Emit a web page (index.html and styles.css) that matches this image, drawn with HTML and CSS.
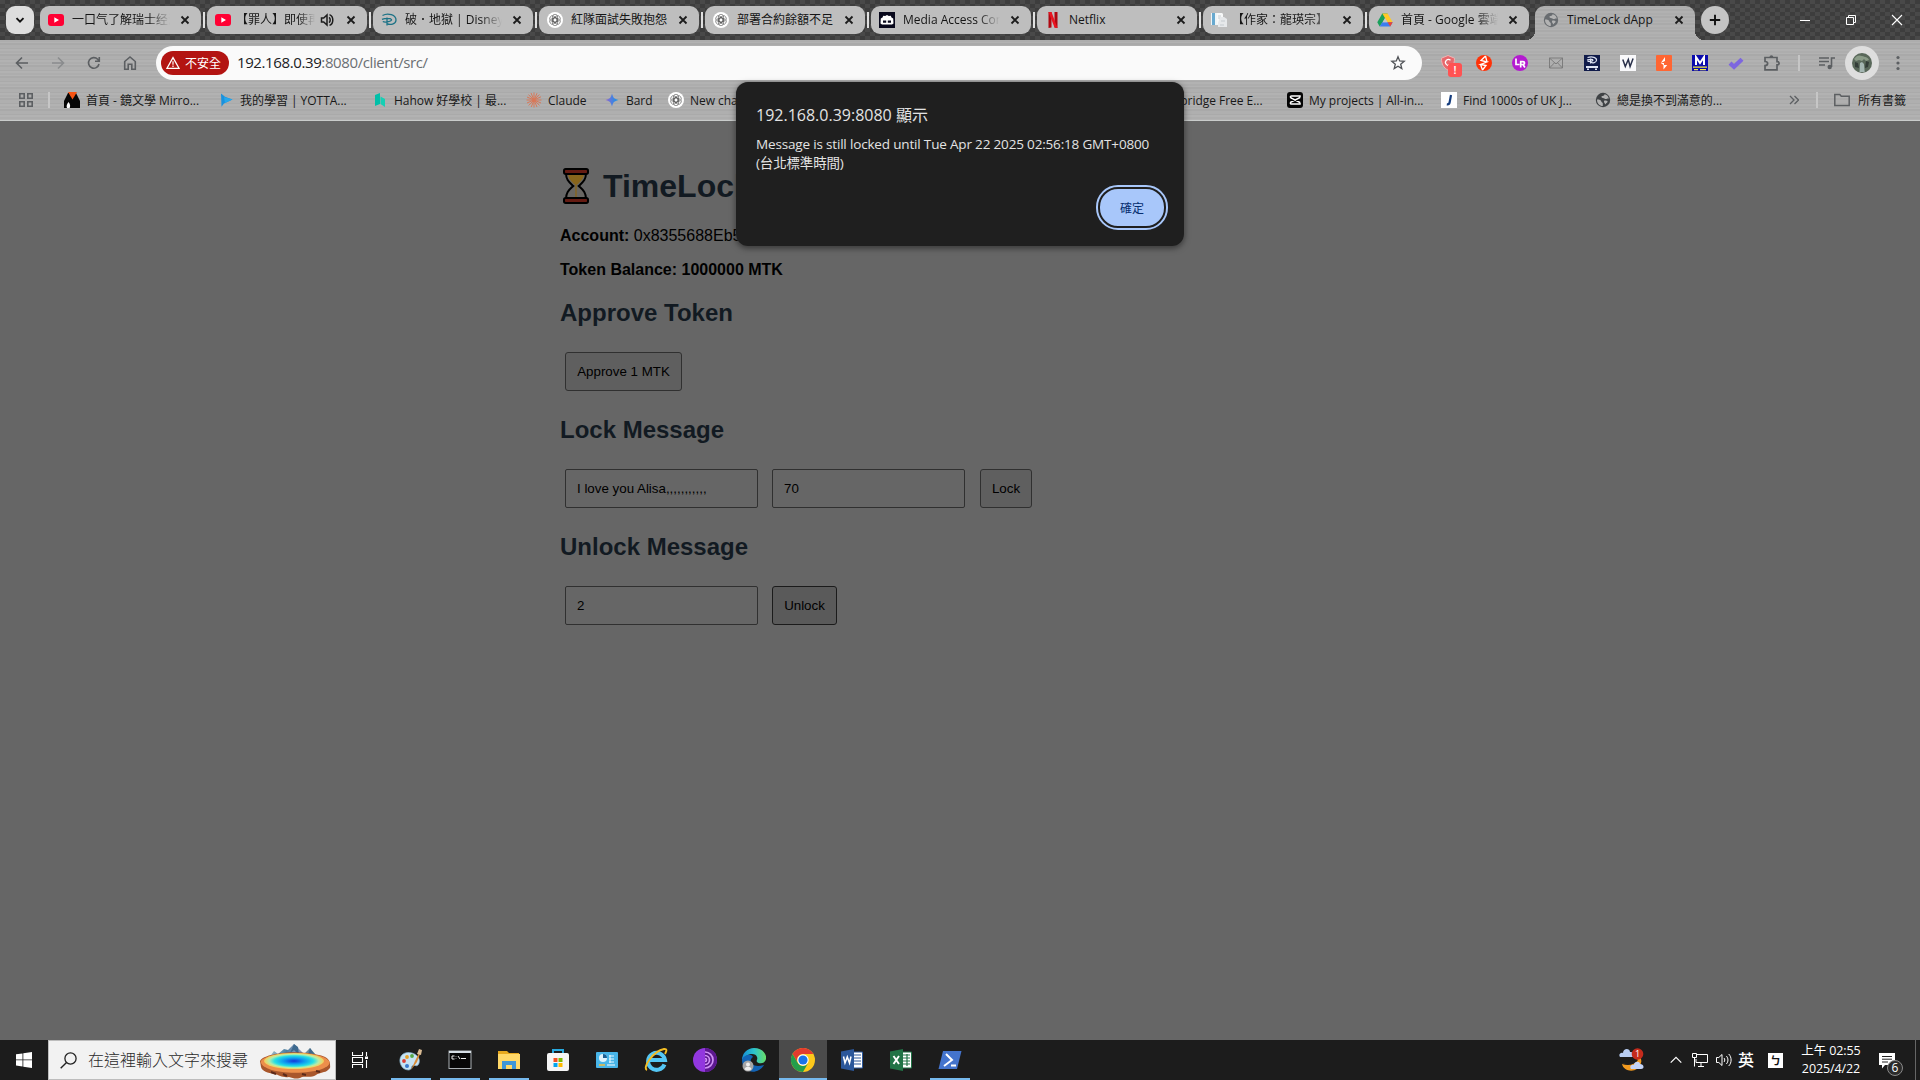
FILE: index.html
```html
<!DOCTYPE html>
<html lang="zh-Hant">
<head>
<meta charset="utf-8">
<title>TimeLock dApp</title>
<link rel="stylesheet" href="styles.css">
</head>
<body>
<svg class="defs" width="0" height="0">
  <defs>
    <symbol id="x" viewBox="0 0 16 16"><path d="M4.5 4.5l7 7M11.5 4.5l-7 7" stroke="#1c1c1c" stroke-width="1.8"/></symbol>
    <symbol id="yt" viewBox="0 0 16 16"><rect y="2" width="16" height="12" rx="3" fill="#ff0033"/><path d="M6.3 5.3v5.4L11 8z" fill="#fff"/></symbol>
    <symbol id="gpt" viewBox="0 0 16 16"><circle cx="8" cy="8" r="8" fill="#fff"/><g fill="none" stroke="#555" stroke-width=".6"><rect x="5.4" y="2.3" width="5.2" height="7.8" rx="2.6"/><rect x="5.4" y="2.3" width="5.2" height="7.8" rx="2.6" transform="rotate(60 8 8)"/><rect x="5.4" y="2.3" width="5.2" height="7.8" rx="2.6" transform="rotate(120 8 8)"/><rect x="5.4" y="2.3" width="5.2" height="7.8" rx="2.6" transform="rotate(180 8 8)"/><rect x="5.4" y="2.3" width="5.2" height="7.8" rx="2.6" transform="rotate(240 8 8)"/><rect x="5.4" y="2.3" width="5.2" height="7.8" rx="2.6" transform="rotate(300 8 8)"/></g></symbol>
    <symbol id="globe" viewBox="0 0 16 16"><circle cx="8" cy="8" r="7.2" fill="currentColor"/><path d="M2 7.4c2.6 0 4 .4 4.3 2.1.2 1.2 1.5.6 1.5 2.1V14C4.6 14 1.9 11.3 2 7.4zM9.5 2.2c0 1.8-1.9 1.5-2.8 2-.8.5 0 1.7 1.1 1.7 1.5 0 1.8 1.2 3.2 1.2.9 0 1.2-.8 2.8-.4-.1-2-2-4.2-4.3-4.5zM9.4 8.6c1.6 0 3.4.2 3.2 1.2-.2 1.2-1.7 1.3-2 2.6-.9-.6-2.3-2.9-1.2-3.8z" fill="#b3b3b3"/></symbol>
  </defs>
</svg>

<div class="screen">
  <header class="tabstrip">
    <button class="tab-search"><svg width="10" height="10" viewBox="0 0 10 10"><path d="M1.5 3.2L5 6.7l3.5-3.5" fill="none" stroke="#111" stroke-width="1.9"/></svg></button>
    <div class="tabs">
      <div class="tab"><svg class="ic"><use href="#yt"/></svg><span class="label fade">一口气了解瑞士经济</span><svg class="ic"><use href="#x"/></svg></div>
      <div class="tab"><svg class="ic"><use href="#yt"/></svg><span class="label fade cjk-open">【罪人】即使再</span><svg class="ic audio" viewBox="0 0 16 16"><path d="M2.5 6v4h2.2L8 13V3L4.7 6z" fill="none" stroke="#1c1c1c" stroke-width="1.5"/><path d="M10 5.3c1.6 1 1.6 4.4 0 5.4M10.5 2.6c4.4 1.6 4.4 9.2 0 10.8" fill="none" stroke="#1c1c1c" stroke-width="1.5"/></svg><svg class="ic"><use href="#x"/></svg></div>
      <div class="tab"><svg class="ic" viewBox="0 0 16 16"><path d="M1.5 3.5C7 .3 15.2 3 15 8.3c-.2 3.9-6 4.9-9 3.3M1 7.3c3-1.2 8.5-1.4 9.5.2.9 1.7-6.3 3.3-8.7 2M6 5.5v8" fill="none" stroke="#1c7286" stroke-width="1.3"/></svg><span class="label fade">破．地獄 | Disney+</span><svg class="ic"><use href="#x"/></svg></div>
      <div class="tab"><svg class="ic"><use href="#gpt"/></svg><span class="label">紅隊面試失敗抱怨</span><svg class="ic"><use href="#x"/></svg></div>
      <div class="tab"><svg class="ic"><use href="#gpt"/></svg><span class="label">部署合約餘額不足</span><svg class="ic"><use href="#x"/></svg></div>
      <div class="tab"><svg class="ic" viewBox="0 0 16 16"><path d="M0 0h16v16H0z" fill="#08081c"/><path d="M1.5 11.5l.3-5 1.7-1 .7-1.8 2 .3L8 3l1.8 1 2-.3.7 1.8 1.7 1 .3 5-1.5 1H3z" fill="#fff"/><path d="M4 8.5h3.2v2.3H4zM8.8 8.5H12v2.3H8.8z" fill="#08081c"/></svg><span class="label fade">Media Access Con</span><svg class="ic"><use href="#x"/></svg></div>
      <div class="tab"><svg class="ic" viewBox="0 0 16 16"><path d="M3.5 0h3v15.5l-3 .5zM9.5 0h3v16l-3-.5z" fill="#b00710"/><path d="M3.5 0h3l6 16-3-.4z" fill="#e91420"/></svg><span class="label">Netflix</span><svg class="ic"><use href="#x"/></svg></div>
      <div class="tab"><svg class="ic" viewBox="0 0 16 16"><path d="M0 1h9v12H0z" fill="#edf4f7"/><path d="M1 1h3v12H1z" fill="#68a9cf"/><path d="M6 1h5l1 1v10H6z" fill="#f7f8f8"/><path d="M9 5h4l3 2v8H7v-4z" fill="#e6e8ea"/><path d="M7 4h3M7 6h2M10 9h4M9 13h4" stroke="#bbc3c8" stroke-width=".8"/></svg><span class="label fade cjk-open">【作家：龍瑛宗】</span><svg class="ic"><use href="#x"/></svg></div>
      <div class="tab"><svg class="ic" viewBox="0 0 16 16"><path d="M5.3 1.5h5.3L5.3 10.7 2.7 14.5.3 10.3z" fill="#18a05b"/><path d="M5.3 1.5h5.3l5.1 8.8h-5.2z" fill="#ffc928"/><path d="M5.3 10.3h10.4l-2.5 4.2H2.7z" fill="#3c7cf0"/><path d="M10.5 10.3h5.2l-2.5 4.2z" fill="#ea4335"/><path d="M8 6.2l2.4 4.1H5.6z" fill="#c6c6c6"/></svg><span class="label fade">首頁 - Google 雲端</span><svg class="ic"><use href="#x"/></svg></div>
      <div class="tab active"><svg class="ic grey"><use href="#globe"/></svg><span class="label">TimeLock dApp</span><svg class="ic"><use href="#x"/></svg></div>
    </div>
    <button class="new-tab"><svg width="12" height="12" viewBox="0 0 12 12"><path d="M6 .8v10.4M.8 6h10.4" stroke="#111" stroke-width="1.9"/></svg></button>
    <div class="win-buttons">
      <span><svg width="12" height="12" viewBox="0 0 12 12"><path d="M1 6.5h10" stroke="#fff"/></svg></span>
      <span><svg width="12" height="12" viewBox="0 0 12 12"><path d="M1.5 3.5h7v7h-7zM3.5 3.5v-2h7v7h-2" fill="none" stroke="#fff"/></svg></span>
      <span><svg width="12" height="12" viewBox="0 0 12 12"><path d="M1 1l10 10M11 1L1 11" stroke="#fff" stroke-width="1.1"/></svg></span>
    </div>
  </header>

  <div class="chrome-body">
    <nav class="toolbar">
      <div class="nav-buttons">
        <svg viewBox="0 0 16 16"><path d="M14 8H3M8 2.5L2.5 8 8 13.5"/></svg>
        <svg class="dim" viewBox="0 0 16 16"><path d="M2 8h11M8 2.5L13.5 8 8 13.5"/></svg>
        <svg viewBox="0 0 16 16"><path d="M13 9a5.3 5.3 0 1 1-1.3-4.7L13.2 6M13.3 2v4.3H9"/></svg>
        <svg viewBox="0 0 16 16"><path d="M2.7 6.5L8 2l5.3 4.5v7.7H9.8V9.3H6.2v4.9H2.7z"/></svg>
      </div>
      <div class="omnibox">
        <span class="chip"><svg width="14" height="14" viewBox="0 0 14 14"><path d="M7 1.6l6 10.7H1z" fill="none" stroke="#fff" stroke-width="1.3"/><path d="M7 5.3v3.4M7 9.6v1.3" stroke="#fff" stroke-width="1.2"/></svg>不安全</span>
        <span class="url"><b>192.168.0.39</b>:8080/client/src/</span>
        <svg class="star" width="16" height="16" viewBox="0 0 16 16"><path d="M8 1.8l1.7 4.2 4.5.3-3.5 2.9 1.1 4.4L8 11.2l-3.8 2.4 1.1-4.4-3.5-2.9 4.5-.3z" fill="none" stroke="#505357" stroke-width="1.3"/></svg>
      </div>
      <div class="extensions">
        <span><svg width="16" height="16" viewBox="0 0 16 16"><path d="M8 .5l6.5 2.7c0 6-2 9.5-6.5 12C3.5 12.7 1.5 9.2 1.5 3.2z" fill="#e7686c" stroke="#f2b2b2"/><path d="M10.5 5.2a3 3 0 1 0 .2 4.3H8" fill="none" stroke="#fff" stroke-width="1.2"/></svg><i class="alert">!</i></span>
        <span><svg width="16" height="16" viewBox="0 0 16 16"><circle cx="8" cy="8" r="8" fill="#ff3208"/><path d="M9.5 1L5 5.5l6 1.5-6.5 2.5 5.5 1-3.5 4.5M9.5 1l1.5 6M4.5 9.5l2 5.5" fill="none" stroke="#fff" stroke-width="1.3"/></svg></span>
        <span><svg width="16" height="16" viewBox="0 0 16 16"><circle cx="8" cy="8" r="8" fill="#b41bd0"/><path d="M4 3.5v6h3.5M8.7 12.5V6.7H11c2 0 2 2.8 0 2.8H9m2 0l1.9 3" fill="none" stroke="#fff" stroke-width="1.7"/></svg></span>
        <span><svg width="16" height="16" viewBox="0 0 16 16"><path d="M1.5 3h13v10h-13zM1.5 3L8 9l6.5-6M1.5 13l5-5.2M14.5 13l-5-5.2" fill="none" stroke="#777" stroke-width=".9"/></svg></span>
        <span><svg width="16" height="16" viewBox="0 0 16 16"><path d="M0 0h16v16H0z" fill="#101b4a"/><path d="M3.5 2.5c5-1.5 9.5 0 9 3-.4 2.2-4 2.8-5.5 1.8M3 5c3-.8 6-.8 6 .2S5 7 3.5 6M6.500 3.500v5" fill="none" stroke="#dde3f3" stroke-width="1.2"/><path d="M2 11h12v2H2zM3 13.500h2v1.500H3zM11 13.500h2v1.500h-2z" fill="#dde3f3"/></svg></span>
        <span><svg width="16" height="16" viewBox="0 0 16 16"><path d="M0 0h16v16H0z" fill="#f8f8fa"/><path d="M2.8 4.5l2.5 7 3-7 1.8 7 3-8" fill="none" stroke="#29304a" stroke-width="1.5"/></svg></span>
        <span><svg width="16" height="16" viewBox="0 0 16 16"><rect width="16" height="16" rx="1" fill="#ff6633"/><path d="M9 2L4.8 8H8v2h3.2L7.5 14.5V10L4.8 8 9 6z" fill="#fff"/></svg></span>
        <span><svg width="16" height="16" viewBox="0 0 16 16"><path d="M0 0h16v16H0z" fill="#0b0bac"/><path d="M4 10V2l4 6 4-6v8" fill="none" stroke="#fff" stroke-width="2"/><path d="M1 12.2h14M2 14.7h4M8 14.7h6" stroke="#f3ec40" stroke-width="1.3"/></svg></span>
        <span><svg width="16" height="16" viewBox="0 0 16 16"><path d="M2 8.2l4 3.6 8-7.6" fill="none" stroke="#7d66df" stroke-width="4.3"/></svg></span>
        <span><svg width="18" height="18" viewBox="0 0 18 18"><path d="M2 3.5h12v4.2h.5a1.6 1.6 0 0 1 0 3.2H14v5H2v-4.4c3.5 0 3.5-4 0-4z" fill="none" stroke="#5c5f62" stroke-width="1.7"/><path d="M6.5 3.5c0-3 3.8-3 3.8 0z" fill="#5c5f62"/></svg></span>
      </div>
      <i class="sep"></i>
      <svg class="media" width="16" height="14" viewBox="0 0 16 14"><path d="M0 2h10M0 5.5h10M0 9h6M12.5 11V2H16" fill="none" stroke="#5c5f62" stroke-width="1.6"/><circle cx="10.7" cy="11" r="2.2" fill="#5c5f62"/></svg>
      <span class="avatar"><svg width="20" height="20" viewBox="0 0 20 20"><circle cx="10" cy="10" r="10" fill="#59685a"/><path d="M2 6c3-4 5-4 8-3s6 1 7 4l-3 1-2-2-2 2-3-1-3 1z" fill="#8b9c88"/><path d="M8 10l2-1 2 2 .7 8H7.5z" fill="#a4b6b2"/><path d="M3 9l3 1 1 5-4-1zM14 8l3 1-1 5-3 1z" fill="#333d38"/></svg></span>
      <svg class="menu" width="4" height="16" viewBox="0 0 4 16" fill="#5c5f62"><circle cx="2" cy="2.5" r="1.6"/><circle cx="2" cy="8" r="1.6"/><circle cx="2" cy="13.5" r="1.6"/></svg>
    </nav>

    <div class="bookmarks">
      <svg class="apps" width="14" height="14" viewBox="0 0 14 14"><path d="M.8.8h4.4v4.4H.8zM8.8.8h4.4v4.4H8.8zM.8 8.8h4.4v4.4H.8zM8.8 8.8h4.4v4.4H8.8z" fill="none" stroke="#5c5f62" stroke-width="1.6"/></svg>
      <i class="sep"></i>
      <div class="marks">
        <a><svg class="ic" viewBox="0 0 16 16"><path d="M0 16V9l4-8h8l4 8v7z" fill="#060606"/><path d="M4 0h9L8.5 7.5z" fill="#f65312"/><path d="M3 16c-1-2 0-4 1.5-6 1.7 2 2 4 1.2 6z" fill="#fff"/></svg>首頁 - 鏡文學 Mirro...</a>
        <a><svg class="ic" viewBox="0 0 16 16"><path d="M3 1.5l4 3.2 7.5 2.8L6 11.5l-2.5 3.3z" fill="#1b91dc"/><path d="M6 5l8.5 2.5L7 11z" fill="#25a7ec"/></svg>我的學習 | YOTTA...</a>
        <a><svg class="ic" viewBox="0 0 16 16"><path d="M3 3l5-2v11l-5 2z" fill="#00bfa8"/><path d="M8.5 4.5L13 7v8l-4.5-3z" fill="#16cfb4"/></svg>Hahow 好學校 | 最...</a>
        <a><svg class="ic" viewBox="0 0 16 16"><path d="M8 .5v15M.5 8h15M2.5 2.7l11 10.6M13.3 2.5L2.7 13.5M5 1l6 14M11 1.2L5.2 15M1 5l14 6M1 11l14-6.2" stroke="#d97757" stroke-width="1"/></svg>Claude</a>
        <a><svg class="ic" viewBox="0 0 16 16"><defs><linearGradient id="bard"><stop offset="0" stop-color="#9a66c9"/><stop offset=".5" stop-color="#4b7fe0"/><stop offset="1" stop-color="#1796e0"/></linearGradient></defs><path d="M8 1.5C9.3 6 10 6.7 14.5 8 10 9.3 9.3 10 8 14.5 6.7 10 6 9.3 1.5 8 6 6.7 6.7 6 8 1.5z" fill="url(#bard)"/></svg>Bard</a>
        <a><svg class="ic"><use href="#gpt"/></svg>New chat</a>
        <a><svg class="ic"><use href="#globe"/></svg>Cambridge Free E...</a>
        <a><svg class="ic" viewBox="0 0 16 16"><rect width="16" height="16" rx="3" fill="#050505"/><path d="M13 5.5V4H4.5C3 4 3 5.5 4.5 6.2L13 10.5M13 10.5V12H4.5C3 12 3 10.5 4.5 9.8L13 5.5" fill="none" stroke="#fff" stroke-width="1.5"/></svg>My projects | All-in...</a>
        <a><svg class="ic" viewBox="0 0 16 16"><path d="M0 0h16v16H0z" fill="#fff"/><path d="M10 3L8.6 10.5C8.3 12 7.2 12.5 5.8 12.3" fill="none" stroke="#153d7e" stroke-width="2.2"/></svg>Find 1000s of UK J...</a>
        <a><svg class="ic dark"><use href="#globe"/></svg>總是換不到滿意的...</a>
      </div>
      <svg class="more" width="10" height="10" viewBox="0 0 10 10"><path d="M1 1l4 4-4 4M5.5 1l4 4-4 4" fill="none" stroke="#5c5f62" stroke-width="1.3"/></svg>
      <i class="sep"></i>
      <a class="all"><svg width="16" height="14" viewBox="0 0 16 14"><path d="M.8 1.5h5l1.5 1.7h7.9v9.3H.8z" fill="none" stroke="#5c5f62" stroke-width="1.5"/></svg>所有書籤</a>
    </div>
  </div>

  <main class="page">
    <div class="app">
      <h1><svg width="26" height="36" viewBox="0 0 26 36"><path d="M3 5C3 12 6 14 10.3 18 6 22 3 24 3 31h20c0-7-3-9-7.3-13C20 14 23 12 23 5z" fill="#696763" stroke="#000" stroke-width="2"/><path d="M5 6h16c-.5 5-3.5 7.500-6.800 10.500h-2.400C8.500 13.500 5.500 11 5 6z" fill="#88651c"/><path d="M12.3 16h1.4v13h-1.4z" fill="#88651c"/><rect x="1" y="1" width="24" height="5" rx="1.7" fill="#651b12" stroke="#000" stroke-width="2"/><rect x="1" y="30" width="24" height="5" rx="1.7" fill="#651b12" stroke="#000" stroke-width="2"/></svg>TimeLock dApp</h1>
      <p><b>Account:</b> 0x8355688Eb5</p>
      <p class="balance"><b>Token Balance: 1000000 MTK</b></p>
      <h2>Approve Token</h2>
      <div class="row"><button class="approve">Approve 1 MTK</button></div>
      <h2>Lock Message</h2>
      <div class="row"><div class="field">I love you Alisa,,,,,,,,,,,</div><div class="field">70</div><button class="lock">Lock</button></div>
      <h2>Unlock Message</h2>
      <div class="row"><div class="field">2</div><button class="unlock">Unlock</button></div>
    </div>
  </main>

  <footer class="taskbar">
    <div class="start"><svg width="16" height="16" viewBox="0 0 16 16"><path d="M0 2.3l6.5-.9v6.1H0zM7.3 1.3L16 0v7.5H7.3zM0 8.3h6.5v6.2L0 13.6zM7.3 8.3H16V16l-8.7-1.3z" fill="#fff"/></svg></div>
    <div class="search">
      <svg width="17" height="17" viewBox="0 0 17 17"><circle cx="10.5" cy="6.5" r="5.6" fill="none" stroke="#222" stroke-width="1.3"/><path d="M6.5 10.5L.7 16.3" stroke="#222" stroke-width="1.4"/></svg>
      <span>在這裡輸入文字來搜尋</span>
      <svg class="spring" width="72" height="36" viewBox="0 0 72 36">
        <defs><radialGradient id="pool"><stop offset="0" stop-color="#1535d8"/><stop offset=".35" stop-color="#0f9bf0"/><stop offset=".65" stop-color="#25e0e4"/><stop offset=".83" stop-color="#b5ecaa"/><stop offset="1" stop-color="#f7ce55"/></radialGradient><linearGradient id="hill"><stop offset="0" stop-color="#a9c4cd"/><stop offset=".35" stop-color="#4c7ea0"/><stop offset=".55" stop-color="#8c98bc"/><stop offset="1" stop-color="#49756c"/></linearGradient></defs>
        <path d="M9 16l6-8 4 3 6-5 4 1 6-6 6 6 4 4 6-6 6 7 5 4v4H9z" fill="url(#hill)"/><path d="M35 1l-4 9 4-3 5 5-1-8zM51 5l-2 7 4-2 4 4z" fill="#3d698f"/>
        <path d="M1 18c2-4 10-6 16-7 14-3 30-2 43 1 6 1 11 4 11 9 0 3 1 4-2 6-3 3-8 2-12 5-5 3-9 1-14 2-5 3-9 1-13 0-7 1-9-2-15-3-6-1-12-3-13-7z" fill="#a9572c"/><path d="M2 18c5-9 58-12 68 0 2 3-2 6-7 8-14 5-40 5-53 0-5-2-9-5-8-8z" fill="#ec8f4b"/><path d="M12 29l5 2M24 31l4 2M43 31l4 1M57 28l4 1" stroke="#5b2a1a" stroke-width="2"/>
        <ellipse cx="35" cy="18" rx="30" ry="8" fill="url(#pool)"/>
      </svg>
    </div>
    <div class="tasks">
      <span class="slot view"><svg width="16" height="16" viewBox="0 0 16 16"><path d="M.5 0v3.5h10V0M.5 16v-3.5h10V16M.5 5.5h10v5H.5zM14.5 0v4M14.5 8v8" fill="none" stroke="#fff" stroke-width="1.1"/><path d="M13 4.5h3V7h-3z" fill="#fff"/></svg></span>
      <span class="slot run"><svg width="24" height="24" viewBox="0 0 24 24"><path d="M1 14C0 7 6 3 13 5c7 2 9 8 6 12-2 2-4-1-6 1-1 2 0 3-3 4-5 0-8-3-9-8z" fill="#c6e3f4" stroke="#8cb8d3" stroke-width=".7"/><circle cx="8" cy="9" r="1.9" fill="#e7a129"/><circle cx="5" cy="13" r="1.9" fill="#dc3e36"/><circle cx="13" cy="8" r="1.9" fill="#54a646"/><circle cx="8" cy="18" r="2" fill="#3979cc"/><path d="M20 5l-4 8-4 9 6-8 3-8z" fill="#d98b36"/><path d="M18 6l2-5 3 1-1 5z" fill="#d9bb94"/></svg></span>
      <span class="slot run"><svg width="24" height="20" viewBox="0 0 24 20"><rect x="1" y="1" width="22" height="17.5" fill="#070707" stroke="#aab0b4"/><path d="M1 2h22" stroke="#d7dfe6" stroke-width="2"/><path d="M6.5 6H4v3h2.5M8 6.5v.5M8 8.5V9M10 6l2 3M13 8.5h5" stroke="#eee" stroke-width="1" fill="none"/></svg></span>
      <span class="slot run"><svg width="24" height="20" viewBox="0 0 24 20"><path d="M1 1h9l2 2h10v15H1z" fill="#e7a91e"/><path d="M1 4h22v15H1z" fill="#ffd868"/><path d="M5 19v-8h14v8h-4v-4H9v4z" fill="#3e96d8"/></svg></span>
      <span class="slot"><svg width="24" height="24" viewBox="0 0 24 24"><path d="M7 7V2h10v5" fill="none" stroke="#27a9df" stroke-width="2"/><rect x="1" y="5" width="22" height="18" rx="2" fill="#f5f5f5"/><path d="M7.5 10h4v4h-4z" fill="#f25022"/><path d="M12.5 10h4v4h-4z" fill="#7fba00"/><path d="M7.5 15h4v4h-4z" fill="#00a4ef"/><path d="M12.5 15h4v4h-4z" fill="#ffb900"/></svg></span>
      <span class="slot"><svg width="22" height="16" viewBox="0 0 22 16"><rect width="22" height="16" rx="1" fill="#48b5e8"/><circle cx="7" cy="6" r="4" fill="#dff3fc"/><path d="M7 6V2a4 4 0 0 1 4 4z" fill="#1a5f94"/><path d="M13 4h5M13 7h5M13 10h5M14 3v8" stroke="#e6f7ff" stroke-width="1.1"/><path d="M3 13h6" stroke="#f3bd3c" stroke-width="1.5"/><path d="M11 13h8" stroke="#fff"/></svg></span>
      <span class="slot"><svg width="24" height="24" viewBox="0 0 24 24"><path d="M20.5 16.5A8.5 8.5 0 1 1 21 12H6" fill="none" stroke="#54c6f4" stroke-width="4"/><path d="M3 22C-2 20 9 3 20 1c4-.5 2 3 1 5" fill="none" stroke="#f2bd24" stroke-width="1.9"/></svg></span>
      <span class="slot"><svg width="24" height="24" viewBox="0 0 24 24"><circle cx="12" cy="12" r="12" fill="#9237df"/><path d="M12 0a12 12 0 0 1 0 24z" fill="#5c178f"/><path d="M12 4a8 8 0 0 1 0 16M12 7.5a4.5 4.5 0 0 1 0 9M12 10.5a1.5 1.5 0 0 1 0 3" fill="none" stroke="#d092f5" stroke-width="1.7"/></svg></span>
      <span class="slot"><svg width="24" height="24" viewBox="0 0 24 24"><defs><linearGradient id="edge"><stop offset="0" stop-color="#158bd4"/><stop offset=".5" stop-color="#2cc3cd"/><stop offset="1" stop-color="#69de67"/></linearGradient></defs><path d="M0 12A12 12 0 0 1 12 0c9 0 13 7 12 11-1 5-7 5-9 3-1-2 1-2 0-5-1-4-9-5-15 3z" fill="url(#edge)"/><path d="M0 12c0-4 9-8 11-3-5 3-2 12 11 8-4 7-13 9-18 4-3-2-4-6-4-9z" fill="#1263b5"/><circle cx="6" cy="18" r="5.5" fill="#a5a5a5"/><circle cx="6" cy="16.5" r="2" fill="#eee"/><path d="M2.5 21c1-3 6-3 7 0-2 2-5 2-7 0z" fill="#eee"/></svg></span>
      <span class="slot run on"><svg width="24" height="24" viewBox="0 0 24 24"><circle cx="12" cy="12" r="12" fill="#fdc81b"/><path d="M1.6 6A12 12 0 0 1 22.4 6H12a6 6 0 0 0-5.2 9z" fill="#e33b2e"/><path d="M1.6 6A12 12 0 0 0 12 24l5.2-9a6 6 0 0 1-10.4 0z" fill="#249d4b"/><circle cx="12" cy="12" r="5.7" fill="#fff"/><circle cx="12" cy="12" r="4.6" fill="#1a73e8"/></svg></span>
      <span class="slot"><svg width="24" height="22" viewBox="0 0 24 22"><path d="M12 3h10.5v16H12z" fill="#fff" stroke="#2b579a"/><path d="M14 6h7M14 9h7M14 12h7M14 15h7" stroke="#2b579a" stroke-width="1.2"/><path d="M1 2.5L14 0v22L1 19.5z" fill="#2b579a"/><path d="M3.5 7.5L5 14l2.3-6 2.2 6L11 7.5" fill="none" stroke="#fff" stroke-width="1.5"/></svg></span>
      <span class="slot"><svg width="24" height="22" viewBox="0 0 24 22"><path d="M12 3h10.5v16H12z" fill="#fff" stroke="#217346"/><path d="M14 6h7M14 9h7M14 12h7M14 15h7M18 5v12" stroke="#217346" stroke-width="1.2"/><path d="M1 2.5L14 0v22L1 19.5z" fill="#217346"/><path d="M4.5 7l5.5 8M10 7l-5.5 8" fill="none" stroke="#fff" stroke-width="1.9"/></svg></span>
      <span class="slot run"><svg width="24" height="20" viewBox="0 0 24 20"><path d="M5 1h18.5L19 19H.5z" fill="#4474cd"/><path d="M8 4l6 6-8 6M13 15.5h5" fill="none" stroke="#fff" stroke-width="2"/></svg></span>
    </div>
    <div class="tray">
      <span class="weather"><svg width="26" height="24" viewBox="0 0 26 24"><path d="M12 5c3 5-2 11-9 11 2 9 17 9 19-1 2-6-5-9-10-10z" fill="#f39a1e"/><path d="M12 5c1 5-2 9-9 11 6 2 13 1 16-4z" fill="#1c1c1c"/><path d="M1 9c-2-3 1-5 3-4 0-5 7-5 7-1 4-1 5 5 1 5z" fill="#b8cdf3"/><path d="M12 21c-2-3 1-5 3-4 0-4 6-4 6-1 4 0 5 5 1 5z" fill="#c3d4f7"/><circle cx="18.5" cy="6" r="5.8" fill="#c42b1c"/></svg><i>1</i></span>
      <span class="t24"><svg width="12" height="8" viewBox="0 0 12 8"><path d="M.7 6.7L6 1.4l5.3 5.3" fill="none" stroke="#fff" stroke-width="1.2"/></svg></span>
      <span class="t24"><svg width="16" height="14" viewBox="0 0 16 14"><path d="M5 1.5h10.5v8H4V6M6 13.5h6M9 9.5v4M.5.5h4v4h-4zM2.5 4.5v9" fill="none" stroke="#fff"/></svg></span>
      <span class="t24"><svg width="16" height="14" viewBox="0 0 16 14"><path d="M.5 4.5v5h2.3L6 12.5v-11L2.8 4.5zM8 5c1 1 1 3 0 4M10.3 3c2.2 2.2 2.2 5.8 0 8M12.7 1c3.2 3.2 3.2 8.8 0 12" fill="none" stroke="#fff"/></svg></span>
      <span class="lang">英</span>
      <span class="ime">ㄅ</span>
      <span class="clock">上午 02:55<br>2025/4/22</span>
      <span class="notes"><svg width="16" height="16" viewBox="0 0 16 16"><path d="M0 0h16v12H6l-3 3.5V12H0z" fill="#fff"/><path d="M3 3.5h10M3 6.2h10M3 9h6" stroke="#222"/></svg><i>6</i></span>
      <span class="peek"></span>
    </div>
  </footer>

  <div class="dialog">
    <div class="dialog-title">192.168.0.39:8080 顯示</div>
    <div class="dialog-text">Message is still locked until Tue Apr 22 2025 02:56:18 GMT+0800<br>(台北標準時間)</div>
    <button class="ok">確定</button>
  </div>
</div>
</body>
</html>
```

FILE: styles.css
```css
* { box-sizing: border-box; }
body { margin: 0; background: #666; font-family: "Open Sans", "Noto Sans CJK TC", sans-serif; }
button { padding: 0; border: 0; font: inherit; }
i { font-style: normal; }
.defs { position: absolute; }
.screen { position: relative; width: 1920px; height: 1080px; overflow: hidden; display: flex; flex-direction: column; }
.ic { width: 16px; height: 16px; flex: none; color: #4c5054; }
.ic.grey { color: #686c70; }
.ic.dark { color: #3f4245; }

/* tab strip */
.tabstrip {
  height: 40px; flex: none; display: flex; align-items: flex-start; padding: 6px 0 0 6px;
  background: conic-gradient(#3d3d3d 25%, #494949 0 50%, #3d3d3d 0 75%, #494949 0) 0 0 / 10px 8px;
}
.tab-search { width: 28px; height: 28px; border-radius: 9px; background: #dedede; display: grid; place-items: center; margin-right: 6px; }
.tabs { display: flex; gap: 6px; width: 1655px; }
.tab {
  position: relative; width: 160px; height: 28px; flex: none; border-radius: 9px; background: #bebebe;
  display: flex; align-items: center; padding: 0 8px; font-size: 12px; color: #151515;
}
.tab:first-child { width: 161px; }
.tab:not(.active):not(:nth-child(9))::after { content: ""; position: absolute; right: -4px; top: 6px; width: 2px; height: 16px; background: #e0e0e0; }
.tab .label { flex: 1; min-width: 0; margin: 0 7px 0 8px; white-space: nowrap; overflow: hidden; line-height: 20px; }
.tab .cjk-open { margin-left: 5px; }
.tab .fade { -webkit-mask-image: linear-gradient(90deg, #000 78%, transparent); mask-image: linear-gradient(90deg, #000 78%, transparent); }
.tab .audio { margin: 0 8px 0 -3px; }
.tab.active { height: 34px; padding-bottom: 6px; border-radius: 9px 9px 0 0; background: repeating-linear-gradient(#adadad 0 2px, #b1b1b1 2px 3px, #aaaaaa 3px 5px, #b1b1b1 5px 7px); }
.tab.active::before, .tab.active::after { content: ""; position: absolute; bottom: 0; width: 9px; height: 9px; }
.tab.active::before { left: -9px; background: radial-gradient(circle at 0 0, transparent 9px, #adadad 9px); }
.tab.active::after { right: -9px; background: radial-gradient(circle at 100% 0, transparent 9px, #adadad 9px); }
.new-tab { width: 28px; height: 28px; border-radius: 50%; background: #c4c4c4; display: grid; place-items: center; margin-left: 6px; }
.win-buttons { margin-left: auto; display: flex; height: 28px; }
.win-buttons span { width: 46px; display: grid; place-items: center; }

/* toolbar */
.chrome-body {
  height: 81px; flex: none; display: flex; flex-direction: column; border-bottom: 1px solid #c9cccb;
  background: repeating-linear-gradient(#adadad 0 2px, #b2b2b2 2px 3px, #a9a9a9 3px 5px, #afafaf 5px 8px, #aaaaaa 8px 9px, #b2b2b2 9px 11px);
}
.toolbar { height: 46px; display: flex; align-items: center; }
.nav-buttons { display: flex; gap: 20px; padding-left: 14px; width: 156px; }
.nav-buttons svg { width: 16px; height: 16px; fill: none; stroke: #5c5f62; stroke-width: 1.6; }
.nav-buttons .dim { stroke: #8a8c8e; }
.omnibox { width: 1266px; height: 34px; border-radius: 17px; background: #fafafa; display: flex; align-items: center; padding: 0 16px 0 5px; }
.chip { width: 68px; height: 24px; border-radius: 12px; background: #b31412; color: #fff; font-size: 12px; display: flex; align-items: center; gap: 5px; padding-left: 5px; white-space: nowrap; }
.url { margin: -2px 0 0 8px; font-size: 15px; letter-spacing: -.39px; color: #6b6f73; }
.url b { font-weight: 400; color: #202124; }
.star { margin-left: auto; }
.extensions { display: flex; margin-left: 8px; }
.extensions span { position: relative; width: 36px; height: 34px; display: grid; place-items: center; }
.extensions .alert { position: absolute; left: 18px; top: 17px; width: 14px; height: 14px; border-radius: 3px; background: #ff5252; color: #fff; font-size: 11px; line-height: 14px; text-align: center; font-weight: 600; }
.sep { width: 2px; height: 16px; background: #c6c6c6; flex: none; }
.toolbar .sep { margin-left: 8px; }
.media { margin-left: 19px; }
.avatar { width: 34px; height: 34px; border-radius: 50%; background: #dedede; display: grid; place-items: center; margin-left: 10px; }
.menu { margin-left: 17px; }

/* bookmarks */
.bookmarks { height: 28px; display: flex; align-items: center; padding-left: 19px; font-size: 12px; letter-spacing: -.03px; color: #181818; }
.apps { margin-right: 15px; }
.marks { display: grid; grid-template-columns: 154px 154px 154px 78px 64px 465px 154px 154px 154px 182px; margin-left: 14px; }
.bookmarks a { display: flex; align-items: center; gap: 6px; white-space: nowrap; }
.more { margin-left: 12px; }
.bookmarks .more + .sep { margin-left: 17px; }
.bookmarks .all { margin-left: 16px; gap: 8px; }

/* page under the modal scrim */
.page { flex: 1; background: #666; font-family: "Liberation Sans", Arial, sans-serif; color: #000; }
.app { width: 800px; margin: 0 auto; padding-top: 46px; }
h1 { margin: 0 0 22px; font-size: 32px; line-height: 38px; color: #121a22; display: flex; gap: 14px; padding-left: 3px; }
h1 svg { margin-top: 1px; }
p { margin: 0 0 16px; font-size: 16px; line-height: 18px; }
.balance { margin-bottom: 20px; }
h2 { margin: 0 0 26px; font-size: 24px; line-height: 27px; color: #121a22; }
.row { display: flex; height: 39px; margin: 0 0 25px 5px; }
.row button, .field { border: 1px solid #303030; border-radius: 2px; font-size: 13.33px; line-height: 37px; height: 39px; }
.field { width: 193px; padding-left: 11px; margin-right: 14px; }
.row button { background: #5f5f5f; color: #000; border-radius: 3px; text-align: center; }
.row .approve { width: 117px; }
.row .lock { width: 52px; margin-left: 1px; }
.row .unlock { width: 65px; background: #5a5a5a; border-color: #1b1b1b; }

/* dialog */
.dialog { position: absolute; left: 736px; top: 82px; width: 448px; height: 164px; border-radius: 12px; background: #1f1f1f; color: #e3e3e3; padding: 22px 20px 0; box-shadow: 0 2px 6px rgba(0,0,0,.5), 0 0 1px #777; display: flex; flex-direction: column; }
.dialog-title { font-size: 16px; line-height: 22px; }
.dialog-text { font-size: 13.5px; line-height: 19px; margin-top: 9px; letter-spacing: -.17px; white-space: nowrap; }
.ok { width: 68px; height: 41px; border-radius: 20px; background: #a8c7fa; color: #062e6f; font-size: 12px; align-self: flex-end; margin: 14px -2px 0 0; border: 2px solid #1f1f1f; outline: 2px solid #a8c7fa; }

/* taskbar */
.taskbar { height: 40px; flex: none; background: #1c1c1c; display: flex; color: #fff; }
.start { width: 48px; display: grid; place-items: center; }
.search { width: 288px; background: #f2f2f2; border: 1px solid #bdbdbd; display: flex; align-items: center; padding-left: 11px; color: #2a2a2a; font-size: 16px; white-space: nowrap; }
.search span { margin: -2px 0 0 11px; width: 171px; font-family: "Noto Sans CJK TC", sans-serif; font-weight: 300; }
.spring { margin-top: 2px; flex: none; }
.tasks { display: flex; gap: 1px; }
.slot { width: 48px; height: 40px; display: grid; place-items: center; position: relative; }
.slot.view { margin-right: 2px; }
.slot.run::after { content: ""; position: absolute; left: 4px; right: 4px; bottom: 0; height: 2px; background: #76b9ed; }
.slot.on { background: #4b4b4b; }
.slot.on::after { left: 0; right: 0; }
.tray { margin-left: auto; display: flex; align-items: center; }
.weather { position: relative; width: 26px; height: 24px; margin-right: 19px; }
.weather i { position: absolute; left: 15px; top: 0; width: 7px; font-size: 9px; line-height: 12px; text-align: center; }
.t24 { width: 24px; display: grid; place-items: center; }
.lang { width: 20px; font-size: 16px; line-height: 24px; text-align: center; font-weight: 500; }
.ime { width: 15px; height: 15px; background: #fff; color: #111; font-size: 11px; line-height: 15px; text-align: center; margin-left: 12px; font-weight: 700; }
.clock { width: 70px; margin-left: 13px; font-size: 12.5px; line-height: 18px; text-align: center; letter-spacing: -.1px; white-space: nowrap; }
.notes { position: relative; width: 16px; height: 16px; margin: 0 20px 0 13px; }
.notes i { position: absolute; left: 8px; top: 8px; width: 16px; height: 16px; border-radius: 50%; border: 1px solid #8a8a8a; background: #2b2b2b; font-size: 12px; line-height: 14px; text-align: center; }
.peek { width: 5px; height: 40px; border-left: 1px solid #666; }
```
